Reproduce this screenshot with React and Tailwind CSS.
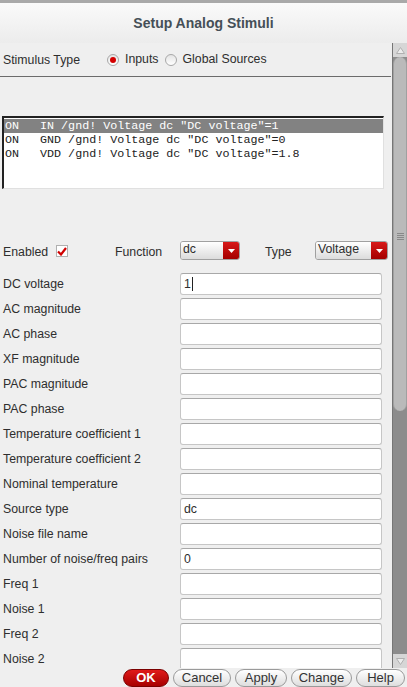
import React from 'react';

const fields = [
    ['DC voltage', '1', true],
    ['AC magnitude', ''],
    ['AC phase', ''],
    ['XF magnitude', ''],
    ['PAC magnitude', ''],
    ['PAC phase', ''],
    ['Temperature coefficient 1', ''],
    ['Temperature coefficient 2', ''],
    ['Nominal temperature', ''],
    ['Source type', 'dc'],
    ['Noise file name', ''],
    ['Number of noise/freq pairs', '0'],
    ['Freq 1', ''],
    ['Noise 1', ''],
    ['Freq 2', ''],
    ['Noise 2', ''],
];

const stimuli = [
    'ON   IN /gnd! Voltage dc "DC voltage"=1',
    'ON   GND /gnd! Voltage dc "DC voltage"=0',
    'ON   VDD /gnd! Voltage dc "DC voltage"=1.8',
];

function Radio({ checked, label }) {
    return (
        <div className="flex items-center gap-[6px]">
            <span className="w-[12px] h-[12px] rounded-full border border-[#a8a8a8] bg-gradient-to-b from-[#e4e4e4] to-white flex items-center justify-center">
                {checked && <span className="w-[6px] h-[6px] rounded-full bg-[#d40000]" />}
            </span>
            <span>{label}</span>
        </div>
    );
}

function Dropdown({ value, width }) {
    return (
        <div className={`flex h-[19px] ${width} rounded-[3px] border border-[#a0a0a0] overflow-hidden`}>
            <div className="flex-1 bg-gradient-to-b from-white to-[#dcdcdc] pl-[2px] leading-[15px] text-[12.3px]">{value}</div>
            <div className="w-[16px] bg-gradient-to-b from-[#d81818] to-[#a40000] flex items-center justify-center">
                <svg width="7" height="4" viewBox="0 0 7 4"><path d="M0 0h7L3.5 4z" fill="#fff" /></svg>
            </div>
        </div>
    );
}

function Btn({ children, w, primary }) {
    return primary ? (
        <button className={`${w} h-[18px] rounded-full border border-[#7a0000] bg-gradient-to-b from-[#e01a1a] to-[#a80000] text-white font-bold text-[13px] leading-[16px]`}>
            {children}
        </button>
    ) : (
        <button className={`${w} h-[18px] rounded-full border border-[#9a9a9a] bg-gradient-to-b from-white to-[#dedede] text-[#333] text-[13px] leading-[16px]`}>
            {children}
        </button>
    );
}

export default function App() {
    return (
        <div className="w-[407px] h-[687px] flex flex-col bg-[#efefef] overflow-hidden text-[12.3px] text-[#2e2e2e]" style={{ fontFamily: '"Liberation Sans", Arial, sans-serif' }}>
            {/* desktop strip */}
            <div className="h-[3px] bg-[#a9a9a9]" />

            {/* Title bar */}
            <div className="h-[40px] bg-gradient-to-b from-[#fafafa] to-[#ececec] flex items-center justify-center">
                <span className="font-bold text-[14px] text-[#454f57]">Setup Analog Stimuli</span>
            </div>

            {/* Body */}
            <div className="flex h-[625px]">
                <div className="flex-1 overflow-hidden">
                    {/* Stimulus type */}
                    <div className="h-[33px] flex items-center pl-[3px]">
                        <span className="w-[104px] pt-[1px]">Stimulus Type</span>
                        <Radio checked label="Inputs" />
                        <div className="w-[6px]" />
                        <Radio label="Global Sources" />
                    </div>
                    <div className="h-[1px] bg-[#6b6b6b] mr-[1px]" />
                    <div className="h-[39px]" />

                    {/* list */}
                    <div className="ml-[2px] w-[382px] h-[73px] bg-white border-t-2 border-l-2 border-t-[#222] border-l-[#222] border-b border-r border-b-[#e0e0e0] border-r-[#e0e0e0] pt-[1px]">
                        {stimuli.map((s, i) => (
                            <div
                                key={i}
                                className={`h-[14px] leading-[14px] pl-[1px] whitespace-pre text-[11.7px] ${i === 0 ? 'bg-[#828282] text-white' : 'text-[#222]'}`}
                                style={{ fontFamily: '"Liberation Mono", "DejaVu Sans Mono", monospace' }}
                            >
                                {s}
                            </div>
                        ))}
                    </div>

                    <div className="h-[51px]" />

                    {/* Enabled / Function / Type */}
                    <div className="h-[21px] flex items-center pl-[3px]">
                        <span className="w-[53px] pt-[3px]">Enabled</span>
                        <span className="w-[12px] h-[12px] mt-[1px] bg-white border border-[#b0b0b0] flex items-center justify-center">
                            <svg width="10" height="9" viewBox="0 0 10 9"><path d="M1 4.5l3 3 5-6.5" stroke="#d00000" strokeWidth="2.2" fill="none" /></svg>
                        </span>
                        <span className="ml-[47px] w-[65px] pt-[3px]">Function</span>
                        <Dropdown value="dc" width="w-[60px]" />
                        <span className="ml-[25px] w-[50px] pt-[3px]">Type</span>
                        <Dropdown value="Voltage" width="w-[73px]" />
                    </div>

                    <div className="h-[11px]" />

                    {/* Fields */}
                    <div className="flex flex-col">
                        {fields.map(([label, value, focus]) => (
                            <div key={label} className="h-[25px] flex items-start pl-[3px]">
                                <span className="w-[177px] mt-[1px] leading-[22px]">{label}</span>
                                <div className="w-[202px] h-[22px] mt-[1px] bg-white border border-[#c6c6c6] border-t-[#a8a8a8] rounded-[3px] pl-[3px] flex items-center">
                                    {value}
                                    {focus && <span className="w-[1px] h-[14px] bg-[#222] ml-[1px]" />}
                                </div>
                            </div>
                        ))}
                    </div>
                </div>

                {/* scrollbar */}
                <div className="w-[15px] flex flex-col border-l border-[#767676] bg-[#8c8c8c]">
                    <div className="h-[14px] bg-[#d6d6d6] flex items-center justify-center">
                        <svg width="9" height="7" viewBox="0 0 9 7"><path d="M4.5 0.5L8.5 6.5H0.5z" fill="#ececec" stroke="#b0b0b0" /></svg>
                    </div>
                    <div className="h-[354px] bg-[#bababa] rounded-[7px] border-x border-[#a0a0a0] flex flex-col items-center justify-center">
                        <div className="flex flex-col gap-[1px] mt-[4px]">
                            <div className="w-[7px] h-[1px] bg-[#888]" />
                            <div className="w-[7px] h-[1px] bg-[#888]" />
                            <div className="w-[7px] h-[1px] bg-[#888]" />
                            <div className="w-[7px] h-[1px] bg-[#888]" />
                        </div>
                    </div>
                    <div className="flex-1" />
                    <div className="h-[14px] bg-[#d6d6d6] flex items-center justify-center">
                        <svg width="9" height="7" viewBox="0 0 9 7"><path d="M4.5 6.5L8.5 0.5H0.5z" fill="#ececec" stroke="#b0b0b0" /></svg>
                    </div>
                </div>
            </div>

            {/* Buttons */}
            <div className="h-[19px] flex justify-end items-start gap-[4px] pr-[2px] pt-[1px] bg-[#efefef]">
                <Btn w="w-[46px]" primary>OK</Btn>
                <Btn w="w-[58px]">Cancel</Btn>
                <Btn w="w-[52px]">Apply</Btn>
                <Btn w="w-[61px]">Change</Btn>
                <Btn w="w-[49px]">Help</Btn>
            </div>
        </div>
    );
}
